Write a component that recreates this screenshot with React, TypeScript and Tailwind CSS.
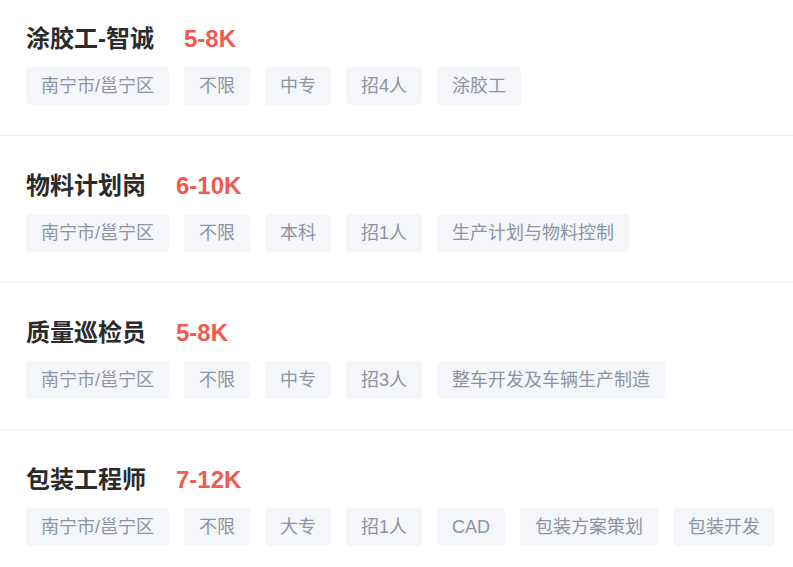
import { FC } from "react";

interface IJob {
  title: string;
  salary: string;
  tags: string[];
}

const jobs: IJob[] = [
  { title: "涂胶工-智诚", salary: "5-8K", tags: ["南宁市/邕宁区", "不限", "中专", "招4人", "涂胶工"] },
  { title: "物料计划岗", salary: "6-10K", tags: ["南宁市/邕宁区", "不限", "本科", "招1人", "生产计划与物料控制"] },
  { title: "质量巡检员", salary: "5-8K", tags: ["南宁市/邕宁区", "不限", "中专", "招3人", "整车开发及车辆生产制造"] },
  {
    title: "包装工程师",
    salary: "7-12K",
    tags: ["南宁市/邕宁区", "不限", "大专", "招1人", "CAD", "包装方案策划", "包装开发"],
  },
];

const App: FC = () => {
  return (
    <div
      className="min-h-[567px] w-[793px] overflow-hidden bg-white"
      style={{ fontFamily: '"Liberation Sans", "Noto Sans CJK SC", sans-serif' }}
    >
      {jobs.map((job, index) => (
        <div
          key={index}
          className="border-b border-[#f0f0f2] pb-[30px] pl-[26px] pt-[34px] first:pt-[23px] last:border-b-0"
        >
          {/* title + salary */}
          <div className="flex items-center gap-[30px] leading-[32px]">
            <h2 className="text-[24px] font-bold text-[#2b2b2b]">{job.title}</h2>
            <span className="text-[24px] font-bold text-[#f05a50]">{job.salary}</span>
          </div>

          {/* tags */}
          <div className="mt-[12px] flex flex-wrap items-center gap-[15px]">
            {job.tags.map((tag, i) => (
              <span
                key={i}
                className="flex h-[38px] items-center rounded-[4px] bg-[#f5f6f9] px-[15px] text-[18px] text-[#8d93a2]"
              >
                {tag}
              </span>
            ))}
          </div>
        </div>
      ))}
    </div>
  );
};

export default App;
